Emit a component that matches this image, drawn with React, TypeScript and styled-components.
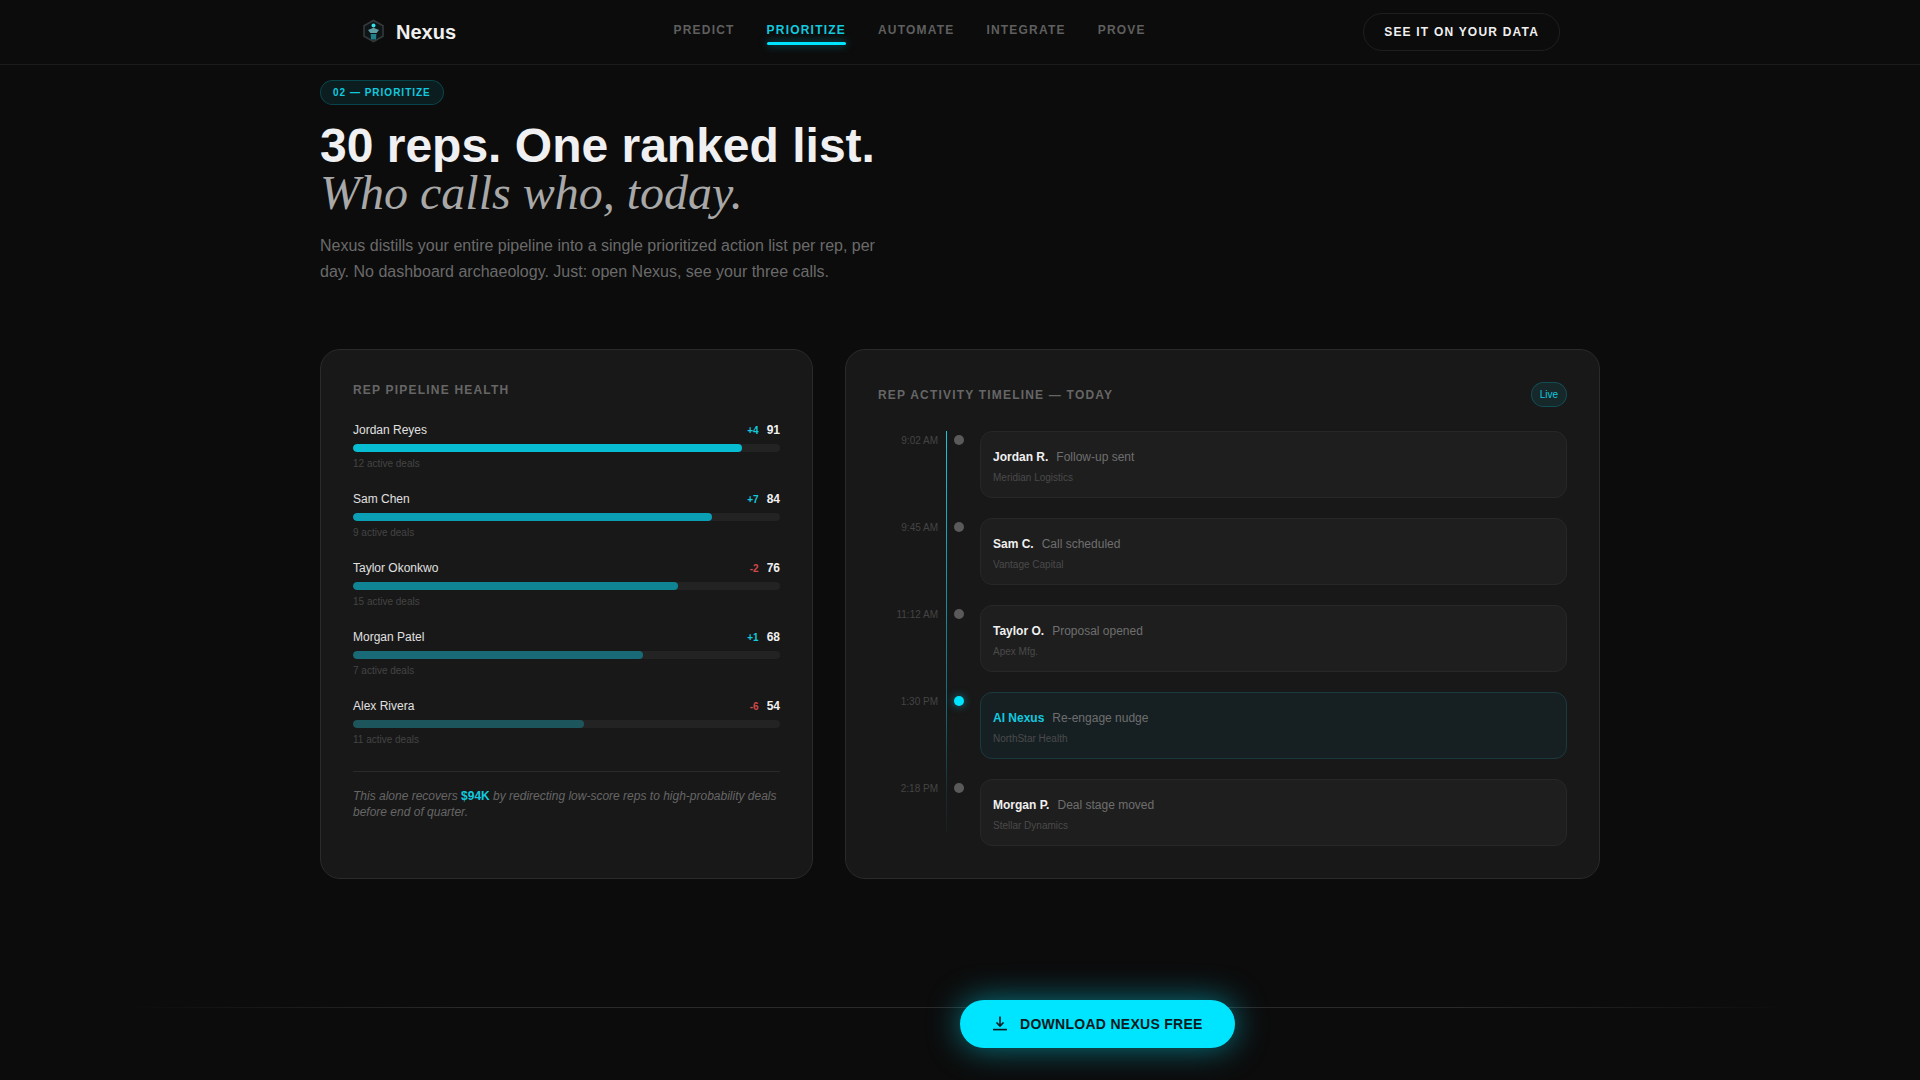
import React from "react";
import styled, { createGlobalStyle } from "styled-components";

const GlobalStyle = createGlobalStyle`
  * {
    box-sizing: border-box;
  }
  body {
    margin: 0;
    background: #0c0c0c;
    font-family: "Liberation Sans", Arial, sans-serif;
    color: #f0f0f0;
  }
`;

const Page = styled.div`
  min-height: 1080px;
  overflow: hidden;
`;

const NavBar = styled.nav`
  height: 65px;
  border-bottom: 1px solid #1c1c1c;
`;

const NavInner = styled.div`
  width: 1280px;
  height: 64px;
  margin: 0 auto;
  padding: 0 40px;
  display: flex;
  justify-content: space-between;
  align-items: center;
`;

const Brand = styled.div`
  display: flex;
  align-items: center;
  gap: 8px;
  font-size: 20px;
  font-weight: 700;
  color: #f0f0f0;
`;

const NavLinks = styled.div`
  display: flex;
  gap: 32px;
`;

const NavLink = styled.a<{ $active?: boolean }>`
  position: relative;
  display: block;
  padding: 0 0 4px;
  font-size: 12px;
  line-height: 14px;
  font-weight: 700;
  letter-spacing: 0.1em;
  color: ${(p) => (p.$active ? "#12c9df" : "#5f5f5f")};
  ${(p) =>
    p.$active &&
    `
    &::after {
      content: "";
      position: absolute;
      left: 0;
      right: 0;
      bottom: -4px;
      height: 3px;
      border-radius: 2px;
      background: #00e5ff;
      box-shadow: 0 0 8px rgba(0, 229, 255, 0.5);
    }
  `}
`;

const NavCta = styled.button`
  height: 38px;
  padding: 0 20px;
  border: 1px solid #1f1f1f;
  border-radius: 19px;
  background: transparent;
  color: #f0f0f0;
  font-family: inherit;
  font-size: 12px;
  font-weight: 700;
  letter-spacing: 0.1em;
`;

const Main = styled.main`
  width: 1280px;
  margin: 0 auto;
  padding-top: 15px;
`;

const SectionBadge = styled.span`
  display: inline-block;
  height: 25px;
  padding: 0 12px;
  border: 1px solid rgba(0, 229, 255, 0.2);
  border-radius: 13px;
  background: rgba(0, 229, 255, 0.08);
  color: #12c9df;
  font-size: 10px;
  line-height: 23px;
  font-weight: 700;
  letter-spacing: 0.1em;
`;

const Title = styled.h1`
  margin: 17px 0 0;
  font-size: 48px;
  line-height: 47px;
  font-weight: 700;
  color: #f0f0f2;
`;

const TitleAccent = styled.em`
  display: block;
  font-family: "Liberation Serif", "Times New Roman", serif;
  font-weight: 400;
  font-style: italic;
  color: #a8a8a8;
`;

const Lead = styled.p`
  width: 560px;
  margin: 17px 0 0;
  font-size: 16px;
  line-height: 26px;
  color: #6a6a6a;
`;

const Columns = styled.div`
  display: grid;
  grid-template-columns: 493px 755px;
  gap: 32px;
  margin-top: 64px;
`;

const Card = styled.section`
  border: 1px solid #2a2a2a;
  border-radius: 20px;
  background: #181818;
  padding: 32px;
`;

const CardTitle = styled.h2`
  margin: 0;
  font-size: 12px;
  line-height: 16px;
  font-weight: 700;
  letter-spacing: 0.1em;
  color: #666;
`;

const RepList = styled.div`
  display: flex;
  flex-direction: column;
  gap: 22px;
  margin-top: 25px;
`;

const RepHead = styled.div`
  display: flex;
  align-items: center;
  height: 14px;
  gap: 8px;
`;

const RepName = styled.span`
  flex: 1;
  font-size: 12px;
  color: #e0e0e0;
`;

const RepDelta = styled.span<{ $down?: boolean }>`
  font-size: 10px;
  font-weight: 700;
  color: ${(p) => (p.$down ? "#d04848" : "#12c9df")};
`;

const RepScore = styled.span`
  font-size: 12px;
  font-weight: 700;
  color: #f0f0f0;
`;

const Track = styled.div`
  height: 8px;
  margin-top: 7px;
  border-radius: 4px;
  background: #232323;
  overflow: hidden;
`;

const Fill = styled.div<{ $color: string }>`
  height: 100%;
  border-radius: 4px;
  background: ${(p) => p.$color};
`;

const RepDeals = styled.div`
  margin-top: 6px;
  font-size: 10px;
  line-height: 12px;
  color: #444;
`;

const RepNote = styled.p`
  margin: 25px 0 0;
  padding-top: 16px;
  border-top: 1px solid #2a2a2a;
  font-size: 12px;
  line-height: 16px;
  font-style: italic;
  color: #666;

  strong {
    font-style: normal;
    color: #12c9df;
  }
`;

const TimelineHead = styled.div`
  display: flex;
  align-items: center;
  justify-content: space-between;
`;

const LivePill = styled.span`
  height: 25px;
  padding: 0 8px;
  border: 1px solid rgba(0, 229, 255, 0.2);
  border-radius: 13px;
  background: rgba(0, 229, 255, 0.08);
  color: #12c9df;
  font-size: 10px;
  line-height: 23px;
`;

const Timeline = styled.div`
  position: relative;
  display: flex;
  flex-direction: column;
  gap: 20px;
  margin-top: 24px;

  &::before {
    content: "";
    position: absolute;
    left: 68px;
    top: 0;
    bottom: 14px;
    width: 1px;
    background: linear-gradient(
      to bottom,
      #12c9df,
      rgba(18, 201, 223, 0.45) 70%,
      rgba(18, 201, 223, 0.12) 90%,
      rgba(18, 201, 223, 0.04)
    );
  }
`;

const TimeRow = styled.div`
  display: grid;
  grid-template-columns: 60px 42px 1fr;
`;

const TimeLabel = styled.span`
  padding-top: 4px;
  text-align: right;
  font-size: 10px;
  line-height: 12px;
  color: #444;
`;

const TimeDot = styled.span<{ $active?: boolean }>`
  width: 10px;
  height: 10px;
  margin: 4px 0 0 16px;
  border-radius: 50%;
  background: ${(p) => (p.$active ? "#00e5ff" : "#5a5a5a")};
  box-shadow: ${(p) => (p.$active ? "0 0 8px rgba(0, 229, 255, 0.5)" : "none")};
`;

const EventCard = styled.div<{ $active?: boolean }>`
  height: 67px;
  padding: 16px 12px;
  border: 1px solid ${(p) => (p.$active ? "#1a3a3f" : "#272727")};
  border-radius: 12px;
  background: ${(p) => (p.$active ? "#162023" : "#1e1e1e")};
`;

const EventLine = styled.div`
  display: flex;
  gap: 8px;
  font-size: 12px;
  line-height: 18px;
`;

const EventActor = styled.strong<{ $active?: boolean }>`
  color: ${(p) => (p.$active ? "#12c9df" : "#f0f0f0")};
`;

const EventAction = styled.span`
  color: #6e6e6e;
`;

const EventCompany = styled.div`
  margin-top: 6px;
  font-size: 10px;
  line-height: 12px;
  color: #4a4a4a;
`;

const Footer = styled.footer`
  position: relative;
  margin-top: 121px;
  padding-left: 50%;

  &::before {
    content: "";
    position: absolute;
    left: 128px;
    right: 128px;
    top: 7px;
    height: 1px;
    background: linear-gradient(to right, transparent, #2a2a2a 20%, #2a2a2a 80%, transparent);
  }
`;

const DownloadButton = styled.button`
  position: relative;
  display: flex;
  align-items: center;
  gap: 12px;
  height: 48px;
  padding: 0 32px;
  border: 0;
  border-radius: 24px;
  background: #00e5ff;
  color: #0a1a20;
  font-family: inherit;
  font-size: 14px;
  font-weight: 700;
  letter-spacing: 0.02em;
  box-shadow: 0 0 32px rgba(0, 229, 255, 0.5);
`;

const LogoMark = () => (
  <svg width="28" height="28" viewBox="0 0 28 28" fill="none">
    <path d="M13.5 2.5 L23 7.8 V18.2 L13.5 23.5 L4 18.2 V7.8 Z" stroke="#34393b" strokeWidth="1.6" fill="#0f1416" />
    <circle cx="13.5" cy="7.5" r="2" fill="#35e0e6" />
    <path d="M8 12 L13.5 9.8 L19 12 L16.6 15 L10.4 15 Z" fill="#5f9ea3" />
    <path d="M10.6 16 H16.4 L16 21.5 H11 Z" fill="#1f8089" />
  </svg>
);

const DownloadIcon = () => (
  <svg width="16" height="16" viewBox="0 0 16 16" fill="none" stroke="currentColor" strokeWidth="1.6">
    <path d="M8 0.5 V10" />
    <path d="M4.5 6.5 L8 10 L11.5 6.5" />
    <path d="M1 13.6 H15" />
  </svg>
);

const NAV_ITEMS = ["PREDICT", "PRIORITIZE", "AUTOMATE", "INTEGRATE", "PROVE"];

const REPS = [
  { name: "Jordan Reyes", delta: "+4", score: 91, deals: "12 active deals", color: "#07bdd3" },
  { name: "Sam Chen", delta: "+7", score: 84, deals: "9 active deals", color: "#0a9fb4" },
  { name: "Taylor Okonkwo", delta: "-2", score: 76, deals: "15 active deals", color: "#0f8495" },
  { name: "Morgan Patel", delta: "+1", score: 68, deals: "7 active deals", color: "#186b76" },
  { name: "Alex Rivera", delta: "-6", score: 54, deals: "11 active deals", color: "#1d555c" },
];

const EVENTS = [
  { time: "9:02 AM", actor: "Jordan R.", action: "Follow-up sent", company: "Meridian Logistics" },
  { time: "9:45 AM", actor: "Sam C.", action: "Call scheduled", company: "Vantage Capital" },
  { time: "11:12 AM", actor: "Taylor O.", action: "Proposal opened", company: "Apex Mfg." },
  { time: "1:30 PM", actor: "AI Nexus", action: "Re-engage nudge", company: "NorthStar Health", active: true },
  { time: "2:18 PM", actor: "Morgan P.", action: "Deal stage moved", company: "Stellar Dynamics" },
];

const App = () => {
  return (
    <Page>
      <GlobalStyle />
      <NavBar>
        <NavInner>
          <Brand>
            <LogoMark />
            Nexus
          </Brand>
          <NavLinks>
            {NAV_ITEMS.map((item) => (
              <NavLink key={item} $active={item === "PRIORITIZE"}>
                {item}
              </NavLink>
            ))}
          </NavLinks>
          <NavCta>SEE IT ON YOUR DATA</NavCta>
        </NavInner>
      </NavBar>
      <Main>
        <SectionBadge>02 — PRIORITIZE</SectionBadge>
        <Title>
          30 reps. One ranked list.
          <TitleAccent>Who calls who, today.</TitleAccent>
        </Title>
        <Lead>
          Nexus distills your entire pipeline into a single prioritized action list per rep, per day. No dashboard
          archaeology. Just: open Nexus, see your three calls.
        </Lead>
        <Columns>
          <Card>
            <CardTitle>REP PIPELINE HEALTH</CardTitle>
            <RepList>
              {REPS.map((rep) => (
                <div key={rep.name}>
                  <RepHead>
                    <RepName>{rep.name}</RepName>
                    <RepDelta $down={rep.delta.startsWith("-")}>{rep.delta}</RepDelta>
                    <RepScore>{rep.score}</RepScore>
                  </RepHead>
                  <Track>
                    <Fill $color={rep.color} style={{ width: `${rep.score}%` }} />
                  </Track>
                  <RepDeals>{rep.deals}</RepDeals>
                </div>
              ))}
            </RepList>
            <RepNote>
              This alone recovers <strong>$94K</strong> by redirecting low-score reps to high-probability deals before
              end of quarter.
            </RepNote>
          </Card>
          <Card>
            <TimelineHead>
              <CardTitle>REP ACTIVITY TIMELINE — TODAY</CardTitle>
              <LivePill>Live</LivePill>
            </TimelineHead>
            <Timeline>
              {EVENTS.map((event) => (
                <TimeRow key={event.time}>
                  <TimeLabel>{event.time}</TimeLabel>
                  <TimeDot $active={event.active} />
                  <EventCard $active={event.active}>
                    <EventLine>
                      <EventActor $active={event.active}>{event.actor}</EventActor>
                      <EventAction>{event.action}</EventAction>
                    </EventLine>
                    <EventCompany>{event.company}</EventCompany>
                  </EventCard>
                </TimeRow>
              ))}
            </Timeline>
          </Card>
        </Columns>
      </Main>
      <Footer>
        <DownloadButton>
          <DownloadIcon />
          DOWNLOAD NEXUS FREE
        </DownloadButton>
      </Footer>
    </Page>
  );
};

export default App;
